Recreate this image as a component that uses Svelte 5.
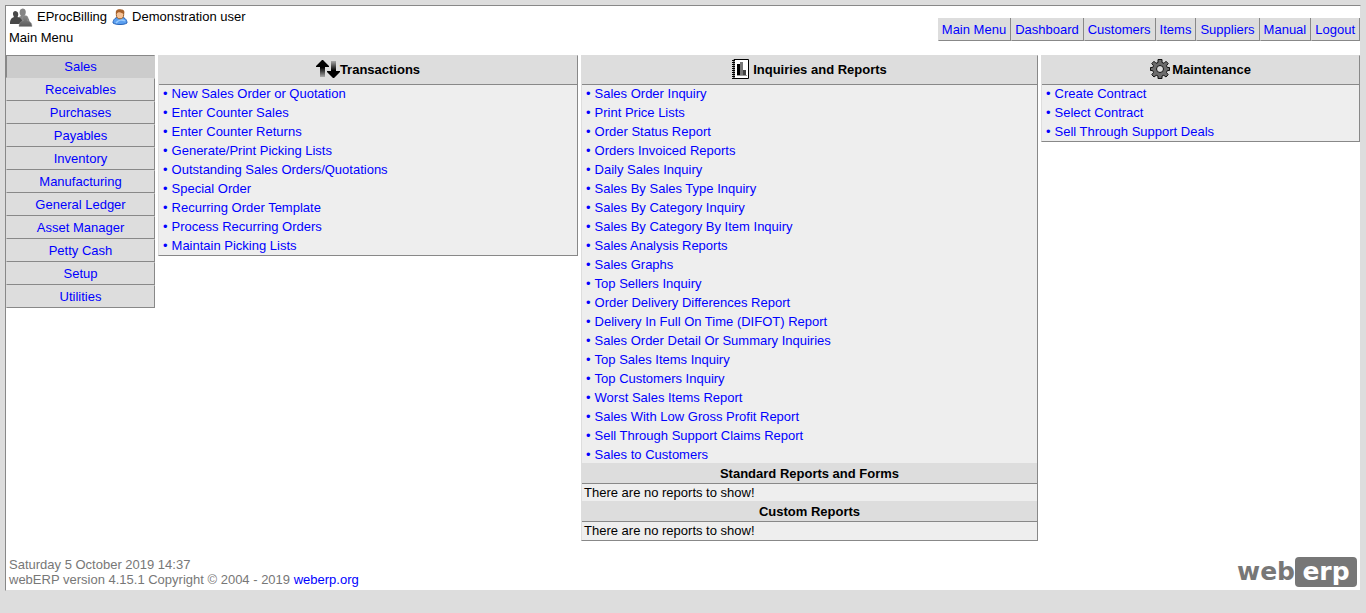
<script>
  const nav = ['Main Menu', 'Dashboard', 'Customers', 'Items', 'Suppliers', 'Manual', 'Logout'];
  const modules = ['Sales', 'Receivables', 'Purchases', 'Payables', 'Inventory', 'Manufacturing', 'General Ledger', 'Asset Manager', 'Petty Cash', 'Setup', 'Utilities'];
  const transactions = [
    'New Sales Order or Quotation', 'Enter Counter Sales', 'Enter Counter Returns',
    'Generate/Print Picking Lists', 'Outstanding Sales Orders/Quotations', 'Special Order',
    'Recurring Order Template', 'Process Recurring Orders', 'Maintain Picking Lists'
  ];
  const inquiries = [
    'Sales Order Inquiry', 'Print Price Lists', 'Order Status Report', 'Orders Invoiced Reports',
    'Daily Sales Inquiry', 'Sales By Sales Type Inquiry', 'Sales By Category Inquiry',
    'Sales By Category By Item Inquiry', 'Sales Analysis Reports', 'Sales Graphs',
    'Top Sellers Inquiry', 'Order Delivery Differences Report',
    'Delivery In Full On Time (DIFOT) Report', 'Sales Order Detail Or Summary Inquiries',
    'Top Sales Items Inquiry', 'Top Customers Inquiry', 'Worst Sales Items Report',
    'Sales With Low Gross Profit Report', 'Sell Through Support Claims Report', 'Sales to Customers'
  ];
  const maintenance = ['Create Contract', 'Select Contract', 'Sell Through Support Deals'];
  const reports = ['Standard Reports and Forms', 'Custom Reports'];
</script>

{#snippet links(items)}
  <ul>
    {#each items as item}
      <li><span class="dot">•</span><a href="#top">{item}</a></li>
    {/each}
  </ul>
{/snippet}

<div class="frame" id="top">
  <header>
    <div class="who">
      <div class="user">
        <svg width="24" height="22" viewBox="0 0 24 22" aria-hidden="true">
          <defs>
            <linearGradient id="people" x1="0" y1="0" x2="0" y2="1">
              <stop offset="0" stop-color="#8a8a8a" /><stop offset="1" stop-color="#5c5c5c" />
            </linearGradient>
          </defs>
          <path d="M7 17c0-4 2-6 5-7-2-2-2-7 1.500-7.500 4 0 4 5 2 7.500 4 1 5 3 5 7z" fill="#858585" />
          <path d="M1 18c0-4 1-6 4-7-1-2-2-5 1-6 3.500 0 4 4 2.500 6 3 1 5 2 5 7z" fill="#484848" />
          <path d="M10 20.500c0-4 2-5 4.500-6-1.500-2-1.500-5 1.500-5 3.500 0 3.500 3 2 5 3 1 5 2 5 6z" fill="url(#people)" stroke="#999" stroke-width=".4" />
        </svg>
        <span class="company">EProcBilling</span>
        <svg width="16" height="16" viewBox="0 0 16 16" aria-hidden="true">
          <path d="M1 14c0-4 3-6 7-6s7 2 7 6c-3 2-11 2-14 0z" fill="#5b9ff0" stroke="#2864b8" />
          <path d="M4 14c2-3 6-4 9-2" fill="none" stroke="#9accff" stroke-width="1.5" />
          <ellipse cx="8" cy="5.5" rx="3.7" ry="4.3" fill="#f7c295" stroke="#99602c" />
          <path d="M4 5C3 0 7 0 9 .5c3 0 4 2 3 4.500C10 4 8 2.500 6 3.500z" fill="#a8622b" />
        </svg>
        <span>Demonstration user</span>
      </div>
      <div>Main Menu</div>
    </div>
    <nav class="quick">
      {#each nav as item}<a href="#top">{item}</a>{/each}
    </nav>
  </header>

  <main>
    <nav class="modules">
      {#each modules as item, i}<a href="#top" class:active={i === 0}>{item}</a>{/each}
    </nav>

    <section>
      <h2 class="tall">
        <svg width="24" height="20" viewBox="0 0 24 20" aria-hidden="true">
          <defs>
            <linearGradient id="up" x1="0" y1="0" x2="0" y2="1"><stop offset=".45" stop-color="#000" /><stop offset="1" stop-color="#aaa" /></linearGradient>
            <linearGradient id="down" x1="0" y1="0" x2="0" y2="1"><stop offset="0" stop-color="#aaa" /><stop offset=".55" stop-color="#000" /></linearGradient>
          </defs>
          <path d="M0 7 6 1h1l6 6v1H9v10H4V8H0z" fill="url(#up)" />
          <path d="M15 2h5v10h4v1l-6 6h-1l-6-6v-1h4z" fill="url(#down)" />
        </svg>Transactions
      </h2>
      {@render links(transactions)}
    </section>

    <section>
      <h2 class="tall">
        <svg class="spaced" width="18" height="22" viewBox="0 0 18 22" aria-hidden="true">
          <path d="M2 1.500h14.500v19H2z" fill="#fff" stroke="#000" />
          <path d="M1.500 2v19" stroke="#000" stroke-width="3" stroke-dasharray="1 1" />
          <path d="M5 6h4v11H5z" fill="#000" /><path d="M8 4h3v13H8z" fill="#777" />
          <path d="M11 12h3v5h-3z" fill="#444" /><path d="M5 17.500h10" stroke="#999" />
        </svg>Inquiries and Reports
      </h2>
      {@render links(inquiries)}
      {#each reports as title}
        <h2>{title}</h2>
        <p>There are no reports to show!</p>
      {/each}
    </section>

    <section>
      <h2 class="tall">
        <svg width="20" height="20" viewBox="0 0 20 20" aria-hidden="true">
          <path d="M8 .5h4v3l2 .8 2-2 2.200 2.200-1.700 2.200.8 1.800h2.200v3h-2.200l-.8 2 1.700 2.200-2.200 2.300-2.200-1.700-1.800.7v2.500H8V17l-1.800-.7L4 18l-2.200-2.300L3.500 13.500l-.8-2H.5v-3h2.200l.8-1.800L1.800 4.500 4 2.300l2 2 2-.8z" fill="#6c6c6c" stroke="#111" />
          <circle cx="10" cy="10" r="3.500" fill="#ddd" stroke="#111" />
        </svg><span class="label">Maintenance</span>
      </h2>
      {@render links(maintenance)}
    </section>
  </main>

  <footer>
    <div>
      <div>Saturday 5 October 2019 14:37</div>
      <div>webERP version 4.15.1 Copyright © 2004 - 2019 <a href="#top">weberp.org</a></div>
    </div>
    <a class="logo" href="#top"><span>web</span><span class="erp">erp</span></a>
  </footer>
</div>

<style>
  :global(body) {
    background: #ddd;
    color: #000;
    font: 13px/15px "Liberation Sans", Arial, sans-serif;
  }
  a { color: #00f; text-decoration: none; }
  svg { flex: none; }
  .frame {
    margin: 5px;
    background: #fff;
    border: 1px solid #888;
    border-right-color: #ddd;
    border-bottom-color: #ddd;
  }
  header {
    display: flex;
    justify-content: space-between;
    align-items: flex-start;
    height: 49px;
  }
  .who { padding: 0 3px; line-height: 20px; }
  .user { display: flex; align-items: center; height: 22px; }
  .company { padding: 0 5px 0 4px; }
  .user span:last-child { padding-left: 4px; }
  .quick {
    display: flex;
    margin-top: 12px;
  }
  .quick a {
    padding: 4px 4px 2px 3px;
    line-height: 16px;
    background: #ddd;
    border-left: 1px solid #ddd;
    border-right: 1px solid #888;
    border-bottom: 1px solid #888;
  }
  main {
    display: grid;
    grid-template-columns: 149px 420fr 457fr 319fr;
    gap: 3px;
    align-items: start;
  }
  .modules { display: flex; flex-direction: column; }
  .modules a {
    padding: 2px 0;
    line-height: 17px;
    text-align: center;
    background: #ddd;
    border: 1px solid;
    border-color: #ddd #888 #888 #ddd;
  }
  .modules .active { background: #ccc; border-color: #888 #ccc #ccc #888; }
  section {
    background: #eee;
    border: 1px solid;
    border-color: #ddd #888 #888 #ddd;
    padding-bottom: 1px;
  }
  h2 {
    display: flex;
    align-items: center;
    justify-content: center;
    margin: 0;
    height: 20px;
    font-size: 13px;
    background: #ddd;
    border-bottom: 1px solid #888;
  }
  .tall { height: 26px; padding-bottom: 2px; }
  .spaced { margin-right: 3px; }
  .label { padding-left: 2px; }
  ul {
    display: grid;
    gap: 2px;
    margin: 0;
    padding: 0 4px;
    list-style: none;
    line-height: 17px;
  }
  .dot { color: #00f; margin-right: 4px; }
  p { margin: 0; padding: 0 2px; line-height: 17px; }
  footer {
    display: flex;
    justify-content: space-between;
    align-items: center;
    margin-top: 16px;
    padding: 0 3px 3px 3px;
    color: #777;
  }
  .logo {
    display: flex;
    font: bold 25px/30px "DejaVu Sans", sans-serif;
    color: #777;
  }
  .erp {
    width: 62px;
    text-align: center;
    color: #fff;
    background: #777;
    border-radius: 4px;
  }
</style>
